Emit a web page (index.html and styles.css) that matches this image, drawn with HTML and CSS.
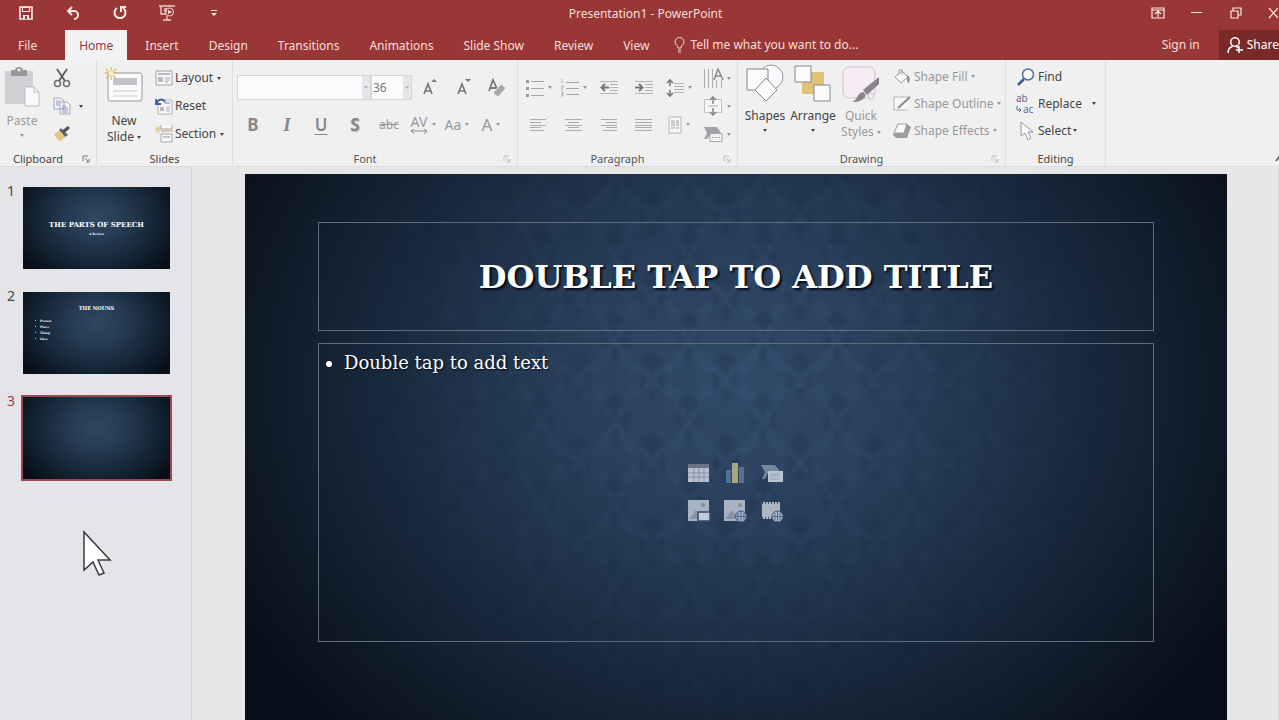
FILE: index.html
```html
<!DOCTYPE html>
<html lang="en">
<head>
    <meta charset="UTF-8">
    <meta name="viewport" content="width=device-width, initial-scale=1.0">
    <title>Presentation1 - PowerPoint</title>
    <link rel="stylesheet" href="styles.css">
</head>
<body>
    <header class="title-bar">
        <div class="quick-access">
            <button aria-label="Save"><svg width="14" height="14" viewBox="0 0 14 14"><path d="M1 1h12v12H1z" fill="none" stroke="#fbe9e7" stroke-width="1.6"/><path d="M3 1h8v5H3zM4 9h6v4H4z" fill="#fbe9e7"/><path d="M4 2h6v3H4zM6 10h2v3H6z" fill="#983735"/></svg></button>
            <button aria-label="Undo"><svg width="14" height="14" viewBox="0 0 14 14"><path d="M6 1L2 5l4 4M2 5h6a4 4 0 0 1 0 8" fill="none" stroke="#fbe9e7" stroke-width="2"/></svg></button>
            <button aria-label="Repeat"><svg width="16" height="16" viewBox="0 0 16 16"><path d="M5 3a5.500 5.500 0 1 0 6 0M9 7V2h5" fill="none" stroke="#fbe9e7" stroke-width="2"/></svg></button>
            <button aria-label="Start from beginning"><svg width="16" height="16" viewBox="0 0 16 16"><path d="M0 1h16M2 1v8h5M5 4h3M5 6h3M8 11v4M4 15h8" fill="none" stroke="#f3cfcc" stroke-width="1.300"/><circle cx="10.500" cy="7" r="4" fill="none" stroke="#f3cfcc"/><path d="M9 5l4 2-4 2z" fill="#fbe9e7"/></svg></button>
            <button aria-label="Customize Quick Access Toolbar"><svg width="6" height="6" viewBox="0 0 6 6"><path d="M0 0h6v1H0zM0 3h6L3 6z" fill="#fbe9e7"/></svg></button>
        </div>
        <div class="document-name">Presentation1 - PowerPoint</div>
        <div class="window-buttons">
            <button aria-label="Ribbon Display Options"><svg width="14" height="12" viewBox="0 0 14 12"><path d="M1 1h12v10H1zM1 3h12M7 10V5M4 7l3-3 3 3" fill="none" stroke="#fbe9e7" stroke-width="1.200"/></svg></button>
            <button aria-label="Minimize"><svg width="12" height="12" viewBox="0 0 12 12"><path d="M0 5.500h11" stroke="#fbe9e7"/></svg></button>
            <button aria-label="Restore"><svg width="12" height="12" viewBox="0 0 12 12"><path d="M1 4h7v7H1zM3 4V1h8v7H8" fill="none" stroke="#fbe9e7" stroke-width="1.200"/></svg></button>
            <button aria-label="Close"><svg width="10" height="12" viewBox="0 0 10 12"><path d="M1 1l9 10M10 1L1 11" stroke="#fbe9e7" stroke-width="1.300"/></svg></button>
        </div>
    </header>

    <nav class="tabs">
        <button class="tab file">File</button>
        <button class="tab active">Home</button>
        <button class="tab">Insert</button>
        <button class="tab">Design</button>
        <button class="tab">Transitions</button>
        <button class="tab">Animations</button>
        <button class="tab">Slide Show</button>
        <button class="tab">Review</button>
        <button class="tab">View</button>
        <label class="tell-me">
            <svg width="12" height="16" viewBox="0 0 12 16"><path d="M4 11C4 8 1 8 1 5a4.500 4.500 0 0 1 9 0c0 3-3 3-3 6zM4 13h3M4 15h3" fill="none" stroke="#f6d5d2"/></svg>
            <input type="text" aria-label="Tell me what you want to do" placeholder="Tell me what you want to do...">
        </label>
        <a class="sign-in" href="#">Sign in</a>
        <button class="share"><svg width="17" height="17" viewBox="0 0 17 17"><circle cx="8" cy="5" r="4.300" fill="none" stroke="#fff" stroke-width="1.500"/><path d="M1 16c0-4 2-6 5-7M9 9l2 2M12 9v7M9 13h7" fill="none" stroke="#fff" stroke-width="1.500"/></svg>Share</button>
    </nav>

    <section class="ribbon">
        <div class="group clipboard">
            <div class="group-body">
                <button class="big disabled">
                    <svg width="36" height="40" viewBox="0 0 36 40"><path d="M1 4h28v33H1z" fill="#cfcfd4"/><path d="M7 3h4c0-4 8-4 8 0h4v6H7z" fill="#96969c"/><circle cx="15" cy="3" r="1.500" fill="#eee"/><path d="M21 20h9l5 5v14H21z" fill="#fbf8fc" stroke="#c3bcc6"/><path d="M30 20v5h5" fill="none" stroke="#c3bcc6"/></svg>
                    <span>Paste</span>
                    <i class="caret"></i>
                </button>
                <div class="stack">
                    <button aria-label="Cut"><svg width="18" height="20" viewBox="0 0 18 20"><path d="M4 1l8 12M14 1L6 13" stroke="#55555a" stroke-width="1.700"/><circle cx="4.500" cy="15.500" r="3" fill="none" stroke="#6d6d74" stroke-width="1.500"/><circle cx="13.500" cy="15.500" r="3" fill="none" stroke="#6d6d74" stroke-width="1.500"/></svg></button>
                    <button class="copy" aria-label="Copy"><svg width="18" height="18" viewBox="0 0 18 18"><path d="M1 1h7l3 3v8H1zM7 5h7l3 3v9H7z" fill="#f5f5fa" stroke="#a3a5ba"/><path d="M3 4h4M3 6h3M3 8h3M9 9h4M9 11h6M9 13h6M9 15h6" stroke="#8b98bf"/></svg><i class="caret"></i></button>
                    <button aria-label="Format Painter"><svg width="18" height="16" viewBox="0 0 18 16"><path d="M1 8l5-3 6 6-4 4-3-1z" fill="#dfc678"/><path d="M6 4l2-2 7 7-3 2z" fill="#6d6671"/><path d="M10 6l6-5" stroke="#55505c" stroke-width="3"/></svg></button>
                </div>
            </div>
            <div class="group-label"><span>Clipboard</span><button class="launcher" aria-label="Clipboard options"><svg width="8" height="8" viewBox="0 0 8 8"><path d="M1 6V1h5M3 3l3 3M7 4v3H4" fill="none" stroke="currentColor"/></svg></button></div>
        </div>

        <div class="group slides">
            <div class="group-body">
                <button class="big">
                    <svg width="40" height="40" viewBox="0 0 40 40"><rect x="4" y="6" width="34" height="28" rx="2" fill="#fbfbfd" stroke="#96969c"/><path d="M9 11h24v7H9z" fill="#c4c4c8"/><path d="M9 24h24M9 29h24" stroke="#c9c9cd"/><path d="M7 0v13M1 6h13M2 2l10 9M12 2L2 11" stroke="#d9bd6a" stroke-width="1.300"/><circle cx="7" cy="6" r="2.500" fill="#f7eecb"/></svg>
                    <span>New<br>Slide <i class="caret"></i></span>
                </button>
                <div class="stack">
                    <button><svg width="18" height="16" viewBox="0 0 18 16"><path d="M1 1h16v14H1z" fill="#f8f8fb" stroke="#a0a0a8"/><path d="M3 3h12v2H3zM3 7h5v5H3z" fill="#b8b8be"/><path d="M10 8h5M10 10h5M10 12h3" stroke="#a6a6ad"/></svg>Layout <i class="caret"></i></button>
                    <button><svg width="18" height="17" viewBox="0 0 18 17"><path d="M3 2h14v14H3z" fill="#f8f8fb" stroke="#b0b0b7"/><path d="M10 4h5v2h-5zM5 9h4v4H5z" fill="#b8b8be"/><path d="M11 9h4M11 11h4M11 13h4" stroke="#b2b2b8"/><path d="M1 1v5h5M1 6c2-5 7-6 9-2" fill="none" stroke="#39649b" stroke-width="1.800"/></svg>Reset</button>
                    <button><svg width="18" height="18" viewBox="0 0 18 18"><path d="M6 0v4h11V0M6 17V9h11v8z" fill="#f8f8fb" stroke="#a6a6ad"/><path d="M6 6h12" stroke="#cb9b8b"/><path d="M8 11h7v2H8z" fill="#c4c4c8"/><path d="M3 1v7M0 4h7M1 2l4 5M5 2L1 7" stroke="#dcc57f"/></svg>Section <i class="caret"></i></button>
                </div>
            </div>
            <div class="group-label"><span>Slides</span></div>
        </div>

        <div class="group font">
            <div class="group-body rows disabled">
                <div class="row">
                    <div class="combo font-name"><select aria-label="Font"><option></option></select><span class="drop"><i class="caret"></i></span></div>
                    <div class="combo font-size"><select aria-label="Font Size"><option>36</option></select><span class="drop"><i class="caret"></i></span></div>
                    <button class="cell" aria-label="Increase Font Size"><svg width="16" height="20" viewBox="0 0 16 20"><path d="M3 16L7 6l4 10M4 13h6" fill="none" stroke="#77777c" stroke-width="1.700"/><path d="M10 4l3-3 3 3z" fill="#77777c"/></svg></button>
                    <button class="cell" aria-label="Decrease Font Size"><svg width="16" height="20" viewBox="0 0 16 20"><path d="M3 16L7 6l4 10M4 13h6" fill="none" stroke="#77777c" stroke-width="1.700"/><path d="M10 1l3 3 3-3z" fill="#77777c"/></svg></button>
                    <button class="cell" aria-label="Clear All Formatting"><svg width="20" height="20" viewBox="0 0 20 20"><path d="M2 13L6 2l5 11M4 10h5" fill="none" stroke="#77777c" stroke-width="1.800"/><path d="M6 15l8-9 5 4-8 9z" fill="#a9a9ad" stroke="#eee"/></svg></button>
                </div>
                <div class="row">
                    <button class="cell letter bold">B</button>
                    <button class="cell letter italic">I</button>
                    <button class="cell letter underline">U</button>
                    <button class="cell letter shadow">S</button>
                    <button class="cell strike">abc</button>
                    <button class="cell spacing"><span>AV<svg width="18" height="5" viewBox="0 0 18 5"><path d="M1 2h16M4 0L1 2l3 3M14 0l3 2-3 3" fill="none" stroke="#8c8c91"/></svg></span><i class="caret"></i></button>
                    <button class="cell case">Aa <i class="caret"></i></button>
                    <button class="cell color">A <i class="caret"></i></button>
                </div>
            </div>
            <div class="group-label disabled"><span>Font</span><button class="launcher" aria-label="Font options"><svg width="8" height="8" viewBox="0 0 8 8"><path d="M1 6V1h5M3 3l3 3M7 4v3H4" fill="none" stroke="currentColor"/></svg></button></div>
        </div>

        <div class="group paragraph">
            <div class="group-body disabled">
                <div class="rows">
                    <div class="row">
                        <button class="cell" aria-label="Bullets"><svg width="18" height="18" viewBox="0 0 18 18"><path d="M5 2.500h13M5 9.500h13M5 16.500h13" stroke="#a6a6aa"/><path d="M0 1h3v3H0zM0 8h3v3H0zM0 15h3v3H0z" fill="#9a9aa4"/></svg><i class="caret"></i></button>
                        <button class="cell" aria-label="Numbering"><svg width="18" height="18" viewBox="0 0 18 18"><path d="M5 3.500h13M5 9.500h13M5 15.500h13" stroke="#a6a6aa"/><path d="M1 0v4M0 7h2v2H0v2h2M0 13h2v4H0M0 15h2" fill="none" stroke="#b6b6ba"/></svg><i class="caret"></i></button>
                        <button class="cell" aria-label="Decrease List Level"><svg width="18" height="15" viewBox="0 0 18 15"><path d="M0 1.500h18M10 4.500h8M10 7.500h8M10 10.500h8M0 13.500h18" stroke="#b5b5b9"/><path d="M9 7.500H2M5 4L1.500 7.500 5 11" fill="none" stroke="#77777c" stroke-width="2"/></svg></button>
                        <button class="cell" aria-label="Increase List Level"><svg width="18" height="15" viewBox="0 0 18 15"><path d="M0 1.500h18M10 4.500h8M10 7.500h8M10 10.500h8M0 13.500h18" stroke="#b5b5b9"/><path d="M0 7.500h7M4 4l3.500 3.500L4 11" fill="none" stroke="#77777c" stroke-width="2"/></svg></button>
                        <button class="cell" aria-label="Line Spacing"><svg width="18" height="18" viewBox="0 0 18 18"><path d="M8 4.500h10M8 7.500h10M8 10.500h10M8 13.500h10" stroke="#b5b5b9"/><path d="M4 1v6M1 4l3-3 3 3M4 11v6M1 14l3 3 3-3" fill="none" stroke="#77777c" stroke-width="1.600"/></svg><i class="caret"></i></button>
                    </div>
                    <div class="row">
                        <button class="cell" aria-label="Align Left"><svg width="17" height="12" viewBox="0 0 17 12"><path d="M0 .5h16M0 3.500h11M0 6.500h16M0 8.500h11M0 11.500h14" stroke="#acacb0"/></svg></button>
                        <button class="cell" aria-label="Center"><svg width="17" height="12" viewBox="0 0 17 12"><path d="M0 .5h17M3 3.500h11M0 6.500h17M3 8.500h11M0 11.500h17" stroke="#acacb0"/></svg></button>
                        <button class="cell" aria-label="Align Right"><svg width="17" height="12" viewBox="0 0 17 12"><path d="M1 .5h16M6 3.500h11M1 6.500h16M6 8.500h11M3 11.500h14" stroke="#acacb0"/></svg></button>
                        <button class="cell" aria-label="Justify"><svg width="17" height="12" viewBox="0 0 17 12"><path d="M0 .5h17M0 3.500h17M0 6.500h17M0 8.500h17M0 11.500h17" stroke="#acacb0"/></svg></button>
                        <button class="cell" aria-label="Columns"><svg width="14" height="18" viewBox="0 0 14 18"><path d="M1 1h12v16H1z" fill="#f6f6f6" stroke="#b5b5b9"/><path d="M3 5h4M3 7h4M3 9h4M3 12h4M8 5h3M8 7h3M8 9h3M8 12h3" stroke="#a2a2a6"/></svg><i class="caret"></i></button>
                    </div>
                </div>
                <div class="stack">
                    <button aria-label="Text Direction"><svg width="21" height="21" viewBox="0 0 21 21"><path d="M1.500 1v19M5.500 1v19M9.500 1v19M13.500 12v8M18.500 12v8" stroke="#adadb2"/><path d="M11 12l4-11 5 11M12 8h6" fill="none" stroke="#88888c" stroke-width="1.500"/></svg><i class="caret"></i></button>
                    <button aria-label="Align Text"><svg width="21" height="20" viewBox="0 0 21 20"><path d="M1.500 3.500h17v13h-17z" fill="#f6f6f6" stroke="#c0c0c4"/><path d="M5 10h10" stroke="#b0b0b4"/><path d="M10 8V1M7 4l3-3 3 3M10 12v7M7 16l3 3 3-3" fill="none" stroke="#88888c" stroke-width="1.500"/></svg><i class="caret"></i></button>
                    <button aria-label="Convert to SmartArt"><svg width="21" height="17" viewBox="0 0 21 17"><path d="M1 1h13l4 6H9l-5 6H1l3-6z" fill="#a2a2a6"/><path d="M7 7.500h12v8H7z" fill="#f4f4f4" stroke="#a6a6aa"/><path d="M9 11.500h8" stroke="#aaa" stroke-dasharray="2 1"/></svg><i class="caret"></i></button>
                </div>
            </div>
            <div class="group-label disabled"><span>Paragraph</span><button class="launcher" aria-label="Paragraph options"><svg width="8" height="8" viewBox="0 0 8 8"><path d="M1 6V1h5M3 3l3 3M7 4v3H4" fill="none" stroke="currentColor"/></svg></button></div>
        </div>

        <div class="group drawing">
            <div class="group-body">
                <button class="big">
                    <svg width="38" height="38" viewBox="0 0 38 38"><circle cx="25" cy="13" r="12" fill="#fbfbfd" stroke="#9a9aa2"/><path d="M1 5h21v21H1z" fill="#fbfbfd" stroke="#85858d"/><path d="M20 14l11 12-11 11L9 26z" fill="#fbfbfd" stroke="#85858d"/></svg>
                    <span>Shapes</span>
                    <i class="caret"></i>
                </button>
                <button class="big">
                    <svg width="38" height="38" viewBox="0 0 38 38"><path d="M8 8h22v22H8z" fill="#dfc37a"/><path d="M1 2h16v16H1zM20 21h16v16H20z" fill="#fbfbfd" stroke="#85858d"/></svg>
                    <span>Arrange</span>
                    <i class="caret"></i>
                </button>
                <button class="big disabled">
                    <svg width="38" height="38" viewBox="0 0 38 38"><rect x="1" y="3" width="32" height="31" rx="6" fill="#f6edf4" stroke="#cfc2cc"/><path d="M21 26L37 13v7L25 31z" fill="#88848a"/><path d="M10 38c5-1 5-9 11-10 5 2 3 10-11 10z" fill="#88848a"/><circle cx="29" cy="32" r="3" fill="#f1edf1" stroke="#cfc2cc"/></svg>
                    <span>Quick<br>Styles <i class="caret"></i></span>
                </button>
                <div class="stack disabled">
                    <button><svg width="18" height="16" viewBox="0 0 18 16"><path d="M2 8l7-6 6 6-7 6zM6 5V1h3v5" fill="#f8f8fa" stroke="#9a9a9e"/><path d="M14 6c3 1 3 5 2 8-3-1-1-5-2-8z" fill="#85858a"/></svg>Shape Fill <i class="caret"></i></button>
                    <button><svg width="18" height="16" viewBox="0 0 18 16"><path d="M16 1H1v13h14" fill="#f6f6f6" stroke="#b5b5b9"/><path d="M5 12L17 1" stroke="#8c8c90" stroke-width="2"/></svg>Shape Outline <i class="caret"></i></button>
                    <button><svg width="18" height="16" viewBox="0 0 18 16"><path d="M5 1h9l4 3-4 11H3l-3-3z" fill="#9c9ca0"/><path d="M5 1h9l-3 9H1z" fill="#fafafa" stroke="#9c9ca0"/></svg>Shape Effects <i class="caret"></i></button>
                </div>
            </div>
            <div class="group-label disabled"><span>Drawing</span><button class="launcher" aria-label="Drawing options"><svg width="8" height="8" viewBox="0 0 8 8"><path d="M1 6V1h5M3 3l3 3M7 4v3H4" fill="none" stroke="currentColor"/></svg></button></div>
        </div>

        <div class="group editing">
            <div class="group-body">
                <div class="stack">
                    <button><svg width="20" height="18" viewBox="0 0 20 18"><circle cx="12" cy="6.500" r="5.500" fill="#fbfbfd" stroke="#56719f" stroke-width="1.500"/><path d="M8 11l-6 6" stroke="#3d5a8c" stroke-width="2.500"/></svg>Find</button>
                    <button class="replace"><span class="replace-icon"><span>ab</span><b><svg width="6" height="7" viewBox="0 0 6 7"><path d="M1 0v4h4M3 2l2 2-2 2" fill="none" stroke="currentColor"/></svg>ac</b></span>Replace <i class="caret"></i></button>
                    <button><svg width="20" height="20" viewBox="0 0 20 20"><path d="M5 1v14l4-3 3 7 3-2-3-6h5z" fill="#fbfbfd" stroke="#96969c"/></svg>Select <i class="caret"></i></button>
                </div>
            </div>
            <div class="group-label"><span>Editing</span></div>
        </div>
        <button class="collapse" aria-label="Collapse the Ribbon"><svg width="8" height="6" viewBox="0 0 8 6"><path d="M1 5l3-4 3 4" fill="none" stroke="#55555a" stroke-width="1.500"/></svg></button>
    </section>

    <main class="workspace">
        <aside class="thumbnails">
            <div class="thumb">
                <span class="number">1</span>
                <div class="mini title-slide"><h2>The Parts of Speech</h2><p>A Review</p></div>
            </div>
            <div class="thumb">
                <span class="number">2</span>
                <div class="mini list-slide"><h2>The Nouns</h2><ul><li>Person</li><li>Place</li><li>Thing</li><li>Idea</li></ul></div>
            </div>
            <div class="thumb selected">
                <span class="number">3</span>
                <div class="mini"></div>
            </div>
        </aside>

        <section class="stage">
            <div class="slide">
                <svg class="damask" width="100%" height="100%">
                    <defs>
                        <pattern id="damask" width="74" height="82" patternUnits="userSpaceOnUse">
                            <path d="M0 0q8 28 37 41Q8 54 0 82M74 0Q66 28 37 41q29 13 37 41" fill="none" stroke="#6f93c0" stroke-width="11" opacity=".5"/>
                            <g id="motif" fill="#04142a">
                                <path d="M37 12c4 6 11 7 10 14-2 5-6 5-8 2 2 6 0 9-2 13-2-4-4-7-2-13-2 3-6 3-8-2-1-7 6-8 10-14z"/>
                                <path d="M26 32c1 6 5 8 10 11-6 1-8 5-7 10-6-1-7-8-3-12-4 0-5-4 0-9zM48 32c-1 6-5 8-10 11 6 1 8 5 7 10 6-1 7-8 3-12 4 0 5-4 0-9z"/>
                                <path d="M37 48c5 5 5 11 0 17-5-6-5-12 0-17z"/>
                            </g>
                            <use href="#motif" x="-37" y="-41"/>
                            <use href="#motif" x="37" y="-41"/>
                            <use href="#motif" x="-37" y="41"/>
                            <use href="#motif" x="37" y="41"/>
                        </pattern>
                    </defs>
                    <rect width="100%" height="100%" fill="url(#damask)"/>
                </svg>
                <h1 class="placeholder slide-title">Double tap to add title</h1>
                <div class="placeholder slide-content">
                    <ul><li>Double tap to add text</li></ul>
                    <div class="insert-icons">
                        <button aria-label="Insert Table"><svg width="24" height="24" viewBox="0 0 24 24"><path d="M1 2h21v4H1z" fill="#6b7486"/><path d="M1 6h21v14H1z" fill="#b8c1cf"/><path d="M1 11h21M1 15h21M7 6v14M12 6v14M17 6v14" stroke="#8591a4"/></svg></button>
                        <button aria-label="Insert Chart"><svg width="24" height="24" viewBox="0 0 24 24"><path d="M2 8h5v13H2z" fill="#4f6f96"/><path d="M8 1h6v20H8z" fill="#a9a67f"/><path d="M15 5h5v16h-5z" fill="#5d6f8d"/></svg></button>
                        <button aria-label="Insert a SmartArt Graphic"><svg width="24" height="24" viewBox="0 0 24 24"><path d="M0 3h14l5 6H8l-4 8H1l3-7z" fill="#71899a"/><path d="M7 9h15v11H7z" fill="#b8c5d5"/><path d="M9 12h10M9 14h10M9 17h10" stroke="#94a2b6"/></svg></button>
                        <button aria-label="Pictures"><svg width="24" height="24" viewBox="0 0 24 24"><path d="M1 1h21v21H1z" fill="#a9b2c2"/><circle cx="16" cy="6" r="2" fill="#7c9485"/><path d="M2 20l7-9 7 9z" fill="#8694a9"/><path d="M11 13h12v9H11z" fill="#c1cad6" stroke="#33496a" stroke-width="1.500"/></svg></button>
                        <button aria-label="Online Pictures"><svg width="24" height="24" viewBox="0 0 24 24"><path d="M0 1h21v21H0z" fill="#a9b2c2"/><circle cx="16" cy="6" r="2" fill="#7c9485"/><path d="M1 20l7-9 7 9z" fill="#8694a9"/><circle cx="17" cy="17.500" r="5.500" fill="#9fb2c8" stroke="#405677"/><path d="M12 17.500h10M17 12v11M14 14v7M20 14v7" stroke="#566d8d"/></svg></button>
                        <button aria-label="Insert Video"><svg width="24" height="24" viewBox="0 0 24 24"><path d="M1 3h18v17H1z" fill="#b0b5c3"/><path d="M1 4h18M1 19h18" stroke="#3a4d6a" stroke-width="2" stroke-dasharray="1 2"/><circle cx="16.500" cy="17.500" r="5.500" fill="#a7b9ca" stroke="#405677"/><path d="M11 17.500h11M16.500 12v11M14 14v7M19 14v7" stroke="#566d8d"/></svg></button>
                    </div>
                </div>
            </div>
        </section>
        <svg class="pointer" width="30" height="46" viewBox="0 0 30 46"><path d="M2 2v38l9-8 6 13 5-2-6-13h12z" fill="#fff" stroke="#3c3840" stroke-width="1.500"/></svg>
    </main>
</body>
</html>
```
FILE: styles.css
```css
* {
    box-sizing: border-box;
}
body {
    margin: 0;
    height: 100vh;
    display: flex;
    flex-direction: column;
    overflow: hidden;
    background-color: #e6e6e6;
    color: #444;
    font-family: "Noto Sans", "Open Sans", sans-serif;
    font-size: 12px;
    line-height: 16px;
}
button, select, input {
    margin: 0;
    padding: 0;
    border: none;
    background: none;
    color: inherit;
    font: inherit;
}
svg {
    display: block;
    flex: none;
}
.caret {
    display: inline-block;
    flex: none;
    border: 2px solid transparent;
    border-top: 3px solid currentColor;
    border-bottom: none;
    vertical-align: middle;
}

/* Title bar: the window runs a little past the right edge */
.title-bar {
    flex: none;
    display: grid;
    grid-template-columns: 1fr auto 1fr;
    align-items: center;
    width: calc(100% + 12px);
    height: 30px;
    padding-bottom: 4px;
    background-color: #983735;
    color: #f9dedb;
}
.document-name {
    padding-top: 2px;
}
.quick-access, .window-buttons {
    display: flex;
    height: 24px;
}
.quick-access {
    padding-left: 2px;
}
.quick-access button {
    width: 47px;
    display: flex;
    align-items: center;
    justify-content: center;
}
.window-buttons {
    justify-content: flex-end;
}
.window-buttons button {
    width: 39px;
    display: flex;
    align-items: center;
    justify-content: center;
}
.window-buttons button:last-child {
    width: 36px;
}

/* Tabs */
.tabs {
    flex: none;
    display: flex;
    height: 30px;
    background-color: #983735;
    color: #f9dedb;
}
.tab {
    padding: 2px 15px 0;
}
.tab.file {
    padding: 2px 28px 0 18px;
}
.tab.active {
    padding: 2px 14px 0;
    margin-right: 3px;
    background-color: #f3f2f2;
    color: #983745;
}
.tell-me {
    display: flex;
    align-items: center;
    flex: 1;
    gap: 4px;
    padding-left: 10px;
}
.tell-me input {
    width: 200px;
}
.tell-me input::placeholder {
    color: #f9dedb;
    opacity: 1;
}
.sign-in {
    align-self: center;
    margin-right: 19px;
    color: inherit;
    text-decoration: none;
}
.share {
    display: flex;
    align-items: center;
    gap: 3px;
    padding-left: 8px;
    background-color: #7a2929;
    color: #fff;
}

/* Ribbon */
.ribbon {
    flex: none;
    display: flex;
    height: 107px;
    background-color: #f0f0f0;
    border-bottom: 1px solid #dcdcdc;
}
.group {
    flex: none;
    display: flex;
    flex-direction: column;
    border-right: 1px solid #dfdfdf;
}
.clipboard {
    width: 97px;
}
.slides {
    width: 136px;
}
.font {
    width: 285px;
}
.paragraph {
    width: 220px;
}
.drawing {
    width: 268px;
}
.editing {
    width: 100px;
}
.group-body {
    display: flex;
    height: 92px;
    padding: 4px 3px 0;
}
.group-label {
    display: flex;
    align-items: center;
    height: 14px;
    font-size: 11px;
    line-height: 14px;
}
.group-label span {
    flex: 1;
    text-align: center;
}
.launcher {
    width: 20px;
    display: flex;
    justify-content: center;
    color: #777;
}
.disabled {
    color: #98989c;
}
.group-label.disabled {
    color: #555;
}
.disabled .launcher {
    color: #bbb;
}
.big {
    width: 48px;
    display: flex;
    flex-direction: column;
    align-items: center;
    text-align: center;
}
.big span {
    margin-top: 6px;
}
.big > .caret {
    margin-top: 5px;
}
.stack {
    display: flex;
    flex-direction: column;
}
.stack button {
    display: flex;
    align-items: center;
    height: 28px;
    gap: 3px;
    white-space: nowrap;
}
.clipboard .big {
    width: 44px;
    margin-left: -3px;
    padding-top: 3px;
}
.clipboard .stack {
    margin-left: 9px;
}
.clipboard .stack button {
    gap: 8px;
}
.slides .stack {
    margin-left: 7px;
}
.slides .big {
    padding-top: 3px;
}
.slides .stack button {
    gap: 2px;
}
.slides .stack .caret {
    margin-left: 2px;
}
.rows {
    display: flex;
    flex-direction: column;
    padding-top: 5px;
}
.row {
    display: flex;
    align-items: center;
    height: 37px;
}
.font .rows {
    padding-top: 9px;
}
.cell {
    width: 34px;
    height: 30px;
    display: flex;
    align-items: center;
    justify-content: center;
    gap: 4px;
    white-space: nowrap;
}
.paragraph .cell {
    width: 35px;
}
.paragraph .stack {
    margin-left: 7px;
}
.combo {
    display: flex;
    height: 25px;
    background-color: #fcfafd;
    border: 1px solid #d5d5da;
}
.combo select {
    flex: 1;
    min-width: 0;
    appearance: none;
    padding-left: 1px;
    color: #77777c;
}
.drop {
    width: 8px;
    display: flex;
    align-items: center;
    justify-content: center;
    overflow: hidden;
    background-color: #e6e6ea;
    color: #b5b5ba;
}
.font-name {
    width: 134px;
    margin-left: 1px;
}
.font-size {
    width: 41px;
}
.letter {
    font-size: 17px;
    color: #88888c;
}
.bold {
    font-weight: 700;
}
.italic {
    font-family: "Liberation Serif", serif;
    font-style: italic;
    font-weight: 700;
    font-size: 19px;
}
.underline {
    font-weight: 600;
    text-decoration: underline 1px;
    text-underline-offset: 3px;
}
.shadow {
    font-weight: 700;
    text-shadow: 1px 1px 1px #bbb;
}
.strike {
    text-decoration: line-through;
}
.spacing span {
    font-size: 14px;
    line-height: 14px;
}
.case {
    font-size: 14px;
}
.color {
    font-size: 17px;
}
.drawing .stack {
    margin-left: 8px;
}
.drawing .stack button, .editing .stack button {
    height: 27px;
}
.drawing .stack, .editing .stack {
    margin-top: -1px;
}
.editing .stack {
    padding-left: 7px;
}
.editing .stack button {
    gap: 2px;
}
.replace .caret {
    margin-left: 8px;
}
.replace-icon {
    display: flex;
    flex-direction: column;
    width: 20px;
    color: #7c5f93;
    font-size: 10px;
    line-height: 11px;
    text-align: left;
}
.replace-icon b {
    display: flex;
    align-items: center;
    gap: 1px;
    color: #55709a;
    font-weight: 400;
}
.collapse {
    align-self: flex-end;
    margin-left: auto;
    margin-right: -4px;
    padding-bottom: 4px;
}

/* Workspace */
.workspace {
    position: relative;
    flex: 1;
    min-height: 0;
    display: flex;
    overflow: hidden;
}
.thumbnails {
    flex: none;
    width: 192px;
    padding: 20px 0 0 7px;
    border-right: 1px solid #d6d6d8;
    background-color: #e5e4e8;
}
.thumb {
    display: flex;
    margin-bottom: 23px;
}
.number {
    width: 16px;
    margin-top: -4px;
    font-size: 14px;
}
.mini {
    width: 147px;
    height: 82px;
    background: radial-gradient(ellipse 60% 85% at 50% 38%, #30475f 0%, #263c54 30%, #152637 66%, #080f19 100%);
    color: #fff;
    font-family: "DejaVu Serif", serif;
    text-align: center;
}
.mini h2 {
    margin: 0;
    font-size: 7px;
    line-height: 10px;
    text-transform: uppercase;
}
.mini p {
    margin: 0;
    font-size: 3px;
    font-weight: 700;
    line-height: 8px;
}
.title-slide {
    padding-top: 33px;
}
.list-slide {
    padding-top: 11px;
}
.list-slide h2 {
    font-size: 5px;
}
.list-slide ul {
    margin: 5px 0 0 12px;
    padding: 0;
    list-style-position: inside;
    font-size: 3px;
    font-weight: 700;
    line-height: 6px;
    text-align: left;
}
.selected .number {
    color: #a83a48;
}
.selected .mini {
    outline: 2px solid #9c4850;
}
.stage {
    flex: 1;
    padding: 7px 51px 0 53px;
    border-right: 1px solid #d9d9d9;
}
.slide {
    position: relative;
    display: flex;
    flex-direction: column;
    gap: 12px;
    aspect-ratio: 16 / 9;
    padding: 48px 73px 0;
    background: radial-gradient(ellipse 58% 88% at 50% 38%, #314a69 0%, #2a415e 25%, #1e3148 50%, #132030 75%, #080f1a 100%);
    color: #fff;
    font-family: "DejaVu Serif", serif;
}
.damask {
    position: absolute;
    inset: 0;
    opacity: 0.12;
    filter: blur(2px);
    -webkit-mask-image: radial-gradient(ellipse 42% 75% at 50% 35%, #000 20%, transparent 100%);
    mask-image: radial-gradient(ellipse 42% 75% at 50% 35%, #000 20%, transparent 100%);
}
.placeholder {
    position: relative;
    border: 1px solid #5f6e7d;
}
.slide-title {
    height: 109px;
    margin: 0;
    display: flex;
    align-items: center;
    justify-content: center;
    font-size: 32px;
    line-height: 40px;
    text-transform: uppercase;
    text-shadow: 2px 2px 2px #050a14;
}
.slide-content {
    display: grid;
    height: 299px;
}
.slide-content ul, .insert-icons {
    grid-area: 1 / 1;
}
.slide-content ul {
    margin: 0;
    padding: 6px 0 0 25px;
    font-size: 18px;
    line-height: 26px;
    text-shadow: 1px 1px 2px #050a14;
}
.insert-icons {
    place-self: center;
    display: grid;
    grid-template-columns: repeat(3, 24px);
    gap: 13px;
}
.pointer {
    position: absolute;
    left: 82px;
    top: 363px;
}
```
